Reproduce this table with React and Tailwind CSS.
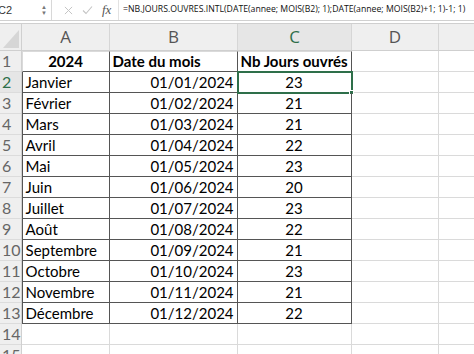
import React from 'react';

const rows = [
  ['Janvier', '01/01/2024', '23'],
  ['Février', '01/02/2024', '21'],
  ['Mars', '01/03/2024', '21'],
  ['Avril', '01/04/2024', '22'],
  ['Mai', '01/05/2024', '23'],
  ['Juin', '01/06/2024', '20'],
  ['Juillet', '01/07/2024', '23'],
  ['Août', '01/08/2024', '22'],
  ['Septembre', '01/09/2024', '21'],
  ['Octobre', '01/10/2024', '23'],
  ['Novembre', '01/11/2024', '21'],
  ['Décembre', '01/12/2024', '22'],
];

const cell = "h-[21px] flex items-center px-[3px] border-r border-b border-[#dadada] overflow-hidden whitespace-nowrap";
const tbl = "border-[#555]";

export default function App() {
  return (
    <div className="w-[474px] h-[354px] bg-white overflow-hidden font-['Lato',sans-serif] text-[15px] text-black">
      {/* formula bar */}
      <div className="h-[21px] flex items-center border-b border-[#d0d0d0] bg-white">
        <div className="w-[52px] h-full flex items-center justify-between pr-[4px] border-r border-[#d8d8d8] font-['Liberation_Sans',sans-serif] text-[11px] text-[#333]">
          <span className="-ml-[2px]">C2</span>
          <span className="flex flex-col text-[6px] leading-[6px] text-[#777]">
            <span>▲</span>
            <span>▼</span>
          </span>
        </div>
        <div className="w-[67px] h-full flex items-center gap-[9px] pl-[12px] border-r border-[#e2e2e2]">
          <svg width="9" height="9" viewBox="0 0 10 10"><path d="M1 1L9 9M9 1L1 9" stroke="#c4c4c4" strokeWidth="1.1" /></svg>
          <svg width="11" height="10" viewBox="0 0 11 10"><path d="M1 5.5L4 8.5L10 1.5" stroke="#c4c4c4" strokeWidth="1.1" fill="none" /></svg>
          <span className="font-['Liberation_Serif',serif] italic text-[13px] text-[#555]">fx</span>
        </div>
        <div className="pl-[4px] font-['Open_Sans',sans-serif] text-[8.7px] text-[#111] whitespace-nowrap">
          =NB.JOURS.OUVRES.INTL(DATE(annee; MOIS(B2); 1);DATE(annee; MOIS(B2)+1; 1)-1; 1)
        </div>
      </div>

      {/* column headers */}
      <div className="mt-[2px] h-[28px] flex bg-[#efefef] border-t border-b border-[#cfcfcf] text-[#555] text-[17px] font-['Open_Sans',sans-serif]">
        <div className="w-[22px] h-full border-r border-[#d0d0d0] relative">
          <svg className="absolute right-[2px] bottom-[2px]" width="16" height="18" viewBox="0 0 16 18"><path d="M16 0L16 18L0 18Z" fill="#d6d6d6" /></svg>
        </div>
        <div className="w-[88px] flex items-center justify-center border-r border-[#d6d6d6]">A</div>
        <div className="w-[128px] flex items-center justify-center border-r border-[#d6d6d6]">B</div>
        <div className="w-[114px] flex items-center justify-center border-r border-[#d6d6d6] bg-[#e6e6e6] text-[#2e6f4a]">C</div>
        <div className="w-[87px] flex items-center justify-center border-r border-[#d6d6d6]">D</div>
        <div className="flex-1"></div>
      </div>

      {/* grid */}
      <div className="flex">
        <div className="w-[22px] flex flex-col bg-[#efefef] border-r border-[#d0d0d0] text-[#666] text-[16px]">
          {Array.from({ length: 15 }, (_, i) => (
            <div key={i} className={`h-[21px] flex items-center pl-[2px] border-b border-[#dcdcdc] ${i === 1 ? 'text-[#2e6f4a] bg-[#e6e6e6]' : ''}`}>
              {i + 1}
            </div>
          ))}
        </div>
        <div className="flex flex-col">
          {/* row 1 */}
          <div className="flex font-bold">
            <div className={`w-[88px] ${cell} justify-center border-l border-t ${tbl} border-r-[#555] border-b-[#555]`}>2024</div>
            <div className={`w-[128px] ${cell} border-t ${tbl} border-r-[#555] border-b-[#555]`}>Date du mois</div>
            <div className={`w-[114px] ${cell} justify-center border-t ${tbl} border-r-[#555] border-b-[#555]`}>Nb Jours ouvrés</div>
            <div className={`w-[87px] ${cell}`}></div>
            <div className={`w-[40px] ${cell} border-r-0`}></div>
          </div>
          {rows.map((r, i) => (
            <div key={i} className="flex">
              <div className={`w-[88px] ${cell} border-l border-l-[#555] border-r-[#555] border-b-[#555]`}>{r[0]}</div>
              <div className={`w-[128px] ${cell} justify-end border-r-[#555] border-b-[#555]`}>{r[1]}</div>
              <div className={`w-[114px] ${cell} justify-center border-r-[#555] border-b-[#555] relative overflow-visible ${i === 0 ? 'outline-2 outline-[#2e6f4a] -outline-offset-1' : ''}`}>
                {r[2]}
                {i === 0 && <span className="absolute -right-[3px] -bottom-[3px] w-[5px] h-[5px] bg-[#2e6f4a] border border-white"></span>}
              </div>
              <div className={`w-[87px] ${cell}`}></div>
              <div className={`w-[40px] ${cell} border-r-0`}></div>
            </div>
          ))}
          {[0, 1].map(i => (
            <div key={'e' + i} className="flex">
              <div className={`w-[88px] ${cell}`}></div>
              <div className={`w-[128px] ${cell}`}></div>
              <div className={`w-[114px] ${cell}`}></div>
              <div className={`w-[87px] ${cell}`}></div>
              <div className={`w-[40px] ${cell} border-r-0`}></div>
            </div>
          ))}
        </div>
      </div>
    </div>
  );
}
